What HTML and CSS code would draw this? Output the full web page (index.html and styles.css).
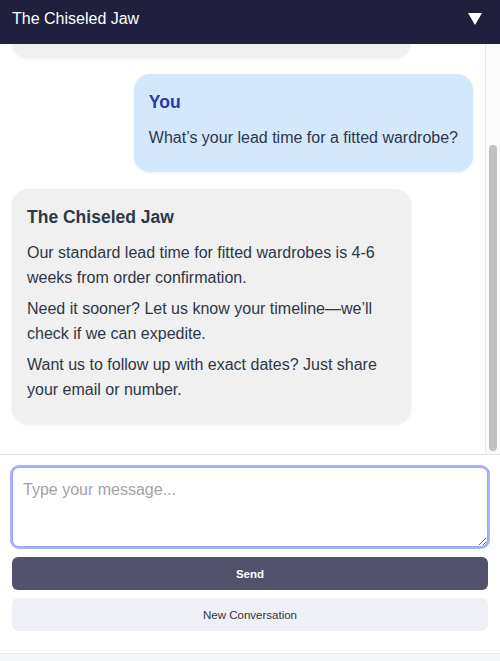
FILE: index.html
```html
<!DOCTYPE html>
<html lang="en">
<head>
<meta charset="utf-8">
<title>The Chiseled Jaw</title>
<link rel="stylesheet" href="styles.css">
</head>
<body>
<div class="widget">
  <header class="header">
    <span class="header-title">The Chiseled Jaw</span>
    <svg class="header-toggle" width="14" height="12" viewBox="0 0 14 12" aria-hidden="true"><polygon points="0,0 14,0 7,12" fill="#ffffff"/></svg>
  </header>
  <div class="messages-frame">
    <div class="messages">
      <div class="messages-inner">
        <div class="bubble bubble-bot">
          <div class="bubble-name">The Chiseled Jaw</div>
          <p>Hi! Welcome to The Chiseled Jaw. How can we help with your fitted furniture today?</p>
        </div>
        <div class="bubble bubble-user">
          <div class="bubble-name">You</div>
          <p>What’s your lead time for a fitted wardrobe?</p>
        </div>
        <div class="bubble bubble-bot">
          <div class="bubble-name">The Chiseled Jaw</div>
          <p>Our standard lead time for fitted wardrobes is 4-6 weeks from order confirmation.</p>
          <p>Need it sooner? Let us know your timeline—we’ll check if we can expedite.</p>
          <p>Want us to follow up with exact dates? Just share your email or number.</p>
        </div>
      </div>
    </div>
    <div class="scrollbar" aria-hidden="true">
      <div class="scrollbar-thumb"></div>
    </div>
  </div>
  <div class="composer">
    <textarea class="composer-input" placeholder="Type your message..."></textarea>
    <button class="btn btn-send" type="button">Send</button>
    <button class="btn btn-new" type="button">New Conversation</button>
  </div>
</div>
</body>
</html>
```

FILE: styles.css
```css
* { box-sizing: border-box; }

html, body {
  margin: 0;
  padding: 0;
}

body {
  background: #f6f7fa;
  font-family: "Liberation Sans", Arial, Helvetica, sans-serif;
  color: #2d3748;
}

.widget {
  height: 654px;
  display: flex;
  flex-direction: column;
  background: #ffffff;
  border-bottom: 1px solid #e3e5ee;
}

.header {
  flex: 0 0 44px;
  background: #201f3d;
  color: #ffffff;
  display: flex;
  align-items: flex-start;
  justify-content: space-between;
  padding: 9px 18px 0 12px;
}

.header-title {
  font-size: 16px;
  line-height: 19px;
}

.header-toggle {
  margin-top: 4px;
}

.messages-frame {
  flex: 1 1 auto;
  min-height: 0;
  display: flex;
  background: #ffffff;
}

.messages {
  flex: 1 1 auto;
  min-width: 0;
  overflow: hidden;
  display: flex;
  flex-direction: column-reverse;
}

.scrollbar {
  flex: 0 0 15px;
  display: flex;
  flex-direction: column;
  background: #fafafa;
  border-left: 1px solid #e8e8e8;
  padding: 101px 3px 3px 3px;
}

.scrollbar-thumb {
  flex: 1 1 auto;
  background: #c1c1c1;
  border-radius: 4px;
}

.messages-inner {
  padding: 16px 12px 14px;
  display: flex;
  flex-direction: column;
}

.bubble {
  border-radius: 16px;
  padding: 16px 15px;
  margin-bottom: 16px;
  box-shadow: 0 1px 3px rgba(0, 0, 0, 0.07);
  font-size: 16px;
  line-height: 25px;
}

.bubble p {
  margin: 0 0 6px;
}

.bubble-name {
  font-size: 17.5px;
  font-weight: bold;
  line-height: 25px;
  margin-bottom: 10px;
}

.bubble-bot {
  align-self: flex-start;
  width: 399px;
  max-width: 86.6%;
  background: #f0f0f0;
  color: #2d3748;
}

.bubble-user {
  align-self: flex-end;
  background: #d3e7fd;
  color: #2d3748;
  margin-bottom: 17px;
}

.bubble-user .bubble-name {
  color: #2a3ba3;
}

.composer {
  flex: 0 0 auto;
  border-top: 1px solid #e2e3ec;
  padding: 12px 12px 22px;
  display: flex;
  flex-direction: column;
}

.composer-input {
  display: block;
  width: 100%;
  height: 80px;
  border: 1px solid #98a4f6;
  box-shadow: 0 0 0 2px #a8b3fa;
  border-radius: 7px;
  padding: 12px 10px;
  font-family: "Liberation Sans", Arial, Helvetica, sans-serif;
  font-size: 16px;
  line-height: 19px;
  color: #2d3748;
  outline: none;
  resize: vertical;
  margin-bottom: 10px;
}

.composer-input::placeholder {
  color: #a3a3a3;
}

.btn {
  display: block;
  width: 100%;
  height: 33px;
  border: none;
  border-radius: 6px;
  font-family: "Liberation Sans", Arial, Helvetica, sans-serif;
  font-size: 11.5px;
  cursor: pointer;
}

.btn-send {
  background: #52516e;
  color: #ffffff;
  font-weight: bold;
  margin-bottom: 8px;
  padding-top: 2px;
}

.btn-new {
  background: #eef0f5;
  color: #2f3542;
}
```
